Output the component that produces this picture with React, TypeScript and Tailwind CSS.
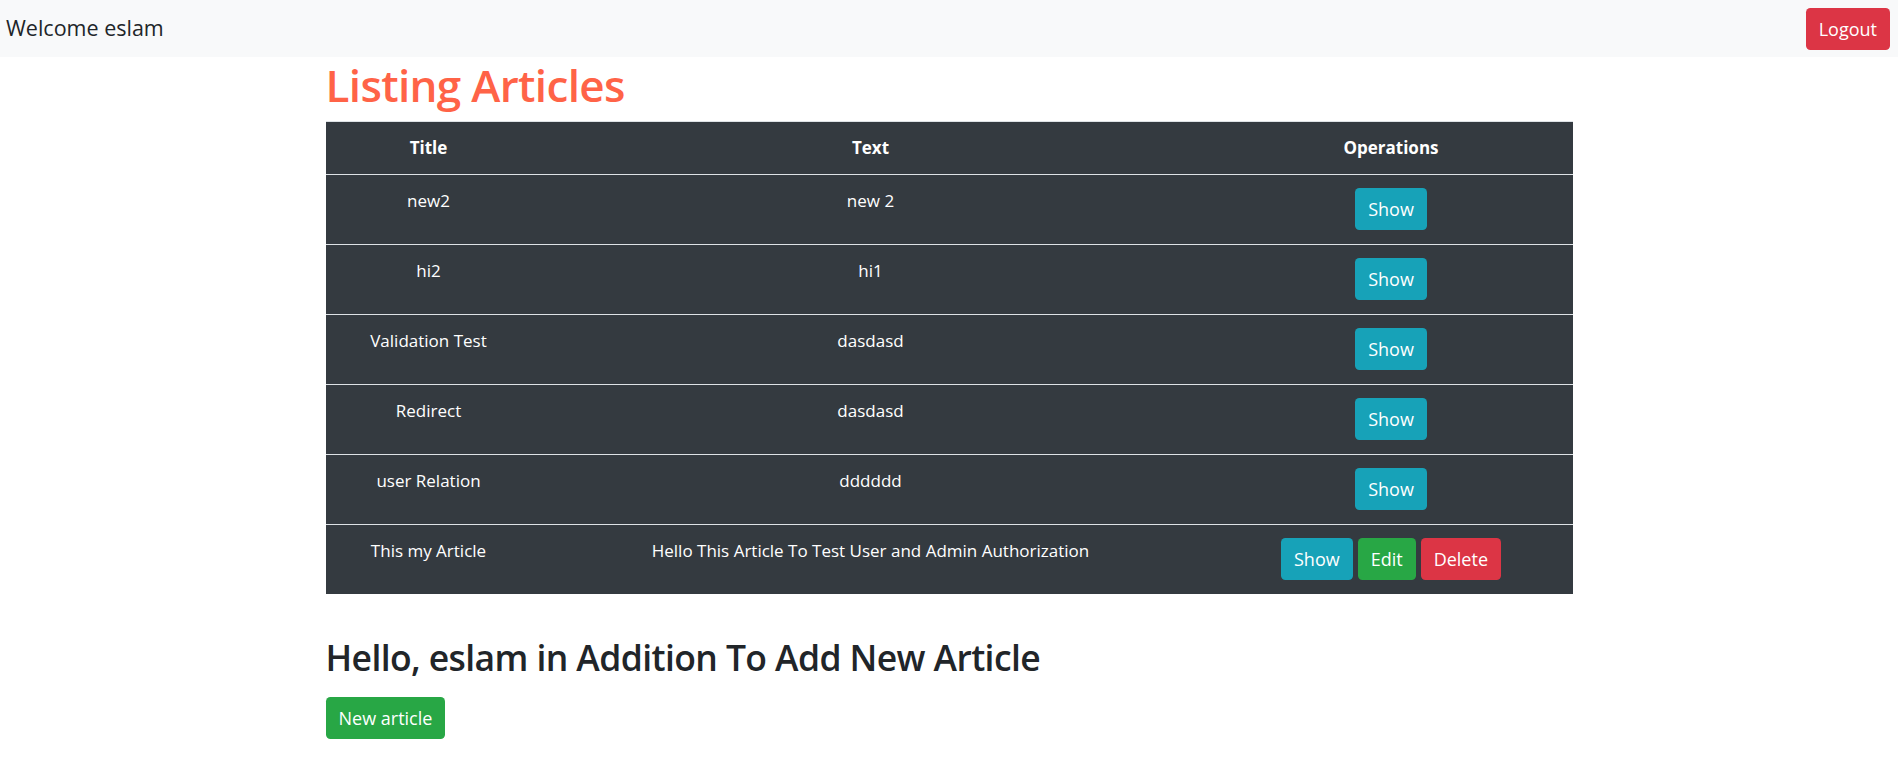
import React from 'react'

type Article = { title: string; text: string; owner?: boolean }

const articles: Article[] = [
  { title: 'new2', text: 'new 2' },
  { title: 'hi2', text: 'hi1' },
  { title: 'Validation Test', text: 'dasdasd' },
  { title: 'Redirect', text: 'dasdasd' },
  { title: 'user Relation', text: 'dddddd' },
  { title: 'This my Article', text: 'Hello This Article To Test User and Admin Authorization', owner: true },
]

const btn = 'inline-block align-middle text-white rounded-[4.4px] px-[13px] h-[42px] leading-[42px] text-[18px]'

export default function App() {
  return (
    <div className="min-h-screen bg-white font-['Open_Sans',sans-serif] text-[#212529]">
      {/* Top bar */}
      <nav className="h-[57px] bg-[#f8f9fa] flex items-center justify-between pl-[6px] pr-[8px]">
        <span className="text-[21.5px]">Welcome eslam</span>
        <button className={`${btn} bg-[#dc3545]`}>Logout</button>
      </nav>

      <div className="w-[1247px] mx-auto">
        <h1 className="text-[44px] leading-[56px] mb-[8px] font-semibold tracking-[-0.65px] text-[#ff6347]">Listing Articles</h1>

        <table className="w-full bg-[#343a40] text-white text-[17px] text-center border-collapse">
          <thead>
            <tr>
              <th className="w-[206px] border-t border-[#dee2e6] font-bold px-[13px] py-[13px] leading-[26px]">Title</th>
              <th className="w-[678px] border-t border-[#dee2e6] font-bold px-[13px] py-[13px] leading-[26px]">Text</th>
              <th className="border-t border-[#dee2e6] font-bold px-[13px] py-[13px] leading-[26px]">Operations</th>
            </tr>
          </thead>
          <tbody>
            {articles.map((a) => (
              <tr key={a.title}>
                <td className="border-t border-[#dee2e6] align-top px-[13px] pt-[13px] pb-[14px] leading-[26px]">{a.title}</td>
                <td className="border-t border-[#dee2e6] align-top px-[13px] pt-[13px] pb-[14px] leading-[26px]">{a.text}</td>
                <td className="border-t border-[#dee2e6] align-top px-[13px] pt-[13px] pb-[14px]">
                  <div className="flex justify-center gap-[5px]">
                    <button className={`${btn} bg-[#17a2b8]`}>Show</button>
                    {a.owner && <button className={`${btn} bg-[#28a745]`}>Edit</button>}
                    {a.owner && <button className={`${btn} bg-[#dc3545]`}>Delete</button>}
                  </div>
                </td>
              </tr>
            ))}
          </tbody>
        </table>

        <h2 className="mt-[41px] text-[35.5px] leading-[44px] font-semibold tracking-[-0.6px] mb-[18px]">Hello, eslam in Addition To Add New Article</h2>
        <button className={`${btn} bg-[#28a745]`}>New article</button>
      </div>
    </div>
  )
}
